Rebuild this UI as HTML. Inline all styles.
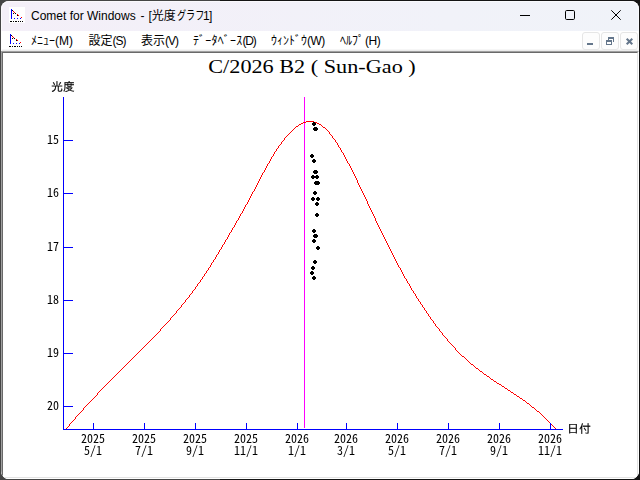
<!DOCTYPE html>
<html lang="ja"><head><meta charset="utf-8"><title>Comet for Windows</title>
<style>
html,body{margin:0;padding:0}
body{width:640px;height:480px;overflow:hidden;position:relative;background:linear-gradient(to right,#454545 0,#454545 220px,#141414 220px,#141414 100%);font-family:"Liberation Sans","Noto Sans CJK JP",sans-serif}
#win{position:absolute;left:1px;top:1px;width:638px;height:478px;border-radius:8px;overflow:hidden;background:#fff}
#tb{position:absolute;left:0;top:0;width:638px;height:30px;background:linear-gradient(to right,#f4eff8,#f1f2f9 70%,#f0f3f9)}
#mb{position:absolute;left:0;top:30px;width:638px;height:20px;box-sizing:border-box;background:#fff;border-bottom:1px solid #ebebeb;box-shadow:inset 0 -1px 0 #f6f6f6}
#mdi{position:absolute;left:0;top:50px;width:638px;height:428px;box-sizing:border-box;border-top:1px solid #a0a0a0;border-left:1px solid #a0a0a0;border-right:1px solid #fff;border-bottom:1px solid #fff;background:#fff}
#mdi i{position:absolute;left:0;top:0;right:0;bottom:0;border-top:1px solid #696969;border-left:1px solid #696969;border-right:1px solid #e3e3e3;border-bottom:1px solid #e3e3e3}
#hl{position:absolute;left:0;top:0;width:638px;height:50px;box-sizing:border-box;border:1px solid rgba(255,255,255,.6);border-bottom:0;border-radius:8px 8px 0 0}
.ico{position:absolute}
.t{position:absolute;white-space:pre;color:#000;font-size:12px;line-height:16px}
#chart{position:absolute;left:0;top:0;will-change:transform}
#chart .lbl text{font-family:"Noto Sans Mono CJK JP","IPAGothic","Liberation Mono",monospace;font-size:12px;fill:#000}
#chart .lbl text.k{font-family:"Liberation Mono","IPAGothic","Noto Sans CJK JP",monospace;stroke:#000;stroke-width:.15px}
#ttl{position:absolute;left:12.25px;top:56.5px;width:600px;text-align:center;font-family:"Liberation Serif",serif;font-size:18px;line-height:20px;color:#000;white-space:pre}
#ttl span{display:inline-block;transform:scale(1.235,.99);transform-origin:50% 50%}
.cb{position:absolute}
.mbtn{position:absolute;top:32px;width:18px;height:17.5px;box-sizing:border-box;border:1px solid #e6e6e6;border-radius:3px;background:#fdfdfd}
</style></head>
<body>
<div id="win">
 <div id="tb"></div>
 <div id="mb"></div>
 <div id="mdi"><i></i></div>
 <div id="hl"></div>
</div>
<svg class="ico" style="left:9px;top:7px" width="16" height="16" viewBox="0 0 16 16" shape-rendering="crispEdges"><rect width="16" height="16" fill="#fff"/><rect x="2" y="2" width="1" height="10" fill="#00f"/><rect x="5" y="11" width="1" height="1" fill="#00f"/><rect x="8" y="11" width="1" height="1" fill="#00f"/><rect x="11" y="11" width="1" height="1" fill="#00f"/><rect x="3" y="3" width="1" height="1" fill="#000"/><rect x="4" y="6" width="1" height="1" fill="#000"/><rect x="6" y="6" width="1" height="1" fill="#000"/><rect x="8" y="8" width="1" height="1" fill="#000"/><rect x="4" y="4" width="1" height="1" fill="#f00"/><rect x="5" y="5" width="1" height="1" fill="#f00"/><rect x="8" y="7" width="1" height="1" fill="#f00"/><rect x="9" y="8" width="1" height="1" fill="#f00"/><rect x="12" y="10" width="1" height="1" fill="#f00"/><rect x="1" y="14" width="2" height="1" fill="#000"/><rect x="4" y="14" width="1" height="1" fill="#000"/><rect x="6" y="14" width="2" height="1" fill="#000"/><rect x="9" y="14" width="1" height="1" fill="#000"/><rect x="11" y="14" width="1" height="1" fill="#000"/><rect x="13" y="14" width="1" height="1" fill="#000"/></svg>
<svg class="ico" style="left:8px;top:32px" width="16" height="16" viewBox="0 0 16 16" shape-rendering="crispEdges"><rect x="2" y="2" width="1" height="10" fill="#00f"/><rect x="5" y="11" width="1" height="1" fill="#00f"/><rect x="8" y="11" width="1" height="1" fill="#00f"/><rect x="11" y="11" width="1" height="1" fill="#00f"/><rect x="3" y="3" width="1" height="1" fill="#000"/><rect x="4" y="6" width="1" height="1" fill="#000"/><rect x="6" y="6" width="1" height="1" fill="#000"/><rect x="8" y="8" width="1" height="1" fill="#000"/><rect x="4" y="4" width="1" height="1" fill="#f00"/><rect x="5" y="5" width="1" height="1" fill="#f00"/><rect x="8" y="7" width="1" height="1" fill="#f00"/><rect x="9" y="8" width="1" height="1" fill="#f00"/><rect x="12" y="10" width="1" height="1" fill="#f00"/><rect x="1" y="14" width="2" height="1" fill="#000"/><rect x="4" y="14" width="1" height="1" fill="#000"/><rect x="6" y="14" width="2" height="1" fill="#000"/><rect x="9" y="14" width="1" height="1" fill="#000"/><rect x="11" y="14" width="1" height="1" fill="#000"/><rect x="13" y="14" width="1" height="1" fill="#000"/></svg>
<div class="t" style="left:31px;top:8px">Comet for Windows</div>
<div class="t" style="left:140.5px;top:8px">-</div>
<div class="t" style="left:148.5px;top:8px">[光度</div>
<div class="t" style="left:176.5px;top:8px;transform:scaleX(.76);transform-origin:0 0">グラフ</div>
<div class="t" style="left:203px;top:8px;letter-spacing:-.6px">1]</div>
<div class="t" style="left:31px;top:33px">ﾒﾆｭｰ<span class="p">(M)</span></div>
<div class="t" style="left:88.5px;top:33px">設定<span class="p" style="letter-spacing:-1px">(S)</span></div>
<div class="t" style="left:141px;top:33px">表示<span class="p" style="letter-spacing:-1px">(V)</span></div>
<div class="t" style="left:193px;top:33px"><span style="letter-spacing:.25px">ﾃﾞｰﾀﾍﾞｰｽ</span><span class="p" style="letter-spacing:-1.2px">(D)</span></div>
<div class="t" style="left:271px;top:33px">ｳｨﾝﾄﾞｳ<span class="p" style="letter-spacing:-.5px">(W)</span></div>
<div class="t" style="left:340px;top:33px">ﾍﾙﾌﾟ<span class="p" style="letter-spacing:-.5px;margin-left:1px">(H)</span></div>
<svg class="cb" style="left:510px;top:5px" width="125" height="22" viewBox="510 5 125 22" fill="none" stroke="#000" stroke-width="1">
 <path d="M520 15.5H530"/>
 <rect x="565.5" y="10.5" width="9" height="9" rx="1.2"/>
 <path d="M611.3 10.3L620.7 19.7M620.7 10.3L611.3 19.7"/>
</svg>
<div class="mbtn" style="left:582px"></div>
<div class="mbtn" style="left:601px"></div>
<div class="mbtn" style="left:620px"></div>
<svg class="cb" style="left:580px;top:31px" width="60" height="20" viewBox="580 31 60 20" fill="#64768b">
 <g shape-rendering="crispEdges"><rect x="587" y="43" width="6" height="2"/>
 <rect x="608" y="37" width="6" height="2"/><rect x="613" y="39" width="1" height="3"/><rect x="608" y="39" width="1" height="1"/>
 <rect x="606" y="40" width="6" height="2"/><rect x="606" y="42" width="1" height="3"/><rect x="611" y="42" width="1" height="3"/><rect x="606" y="44" width="6" height="1"/></g>
 <path d="M626.7 38.7L632.3 44.3M632.3 38.7L626.7 44.3" fill="none" stroke="#64768b" stroke-width="2"/>
</svg>
<div id="ttl"><span>C/2026 B2 ( Sun-Gao )</span></div>
<svg id="chart" width="640" height="480" viewBox="0 0 640 480">
<g shape-rendering="crispEdges">
<rect x="304" y="97" width="1" height="331" fill="#ff00ff"/>
<path fill="#ff0000" d="M66 428h1v1h-1zM67 427h1v1h-1zM68 426h1v1h-1zM69 424h1v2h-1zM70 423h1v1h-1zM71 422h1v1h-1zM72 421h1v1h-1zM73 420h1v1h-1zM74 419h1v1h-1zM75 417h1v2h-1zM76 416h1v1h-1zM77 415h1v1h-1zM78 414h1v1h-1zM79 413h1v1h-1zM80 412h1v1h-1zM81 411h1v1h-1zM82 410h1v1h-1zM83 408h1v2h-1zM84 407h1v1h-1zM85 406h1v1h-1zM86 405h1v1h-1zM87 404h1v1h-1zM88 403h1v1h-1zM89 402h1v1h-1zM90 401h1v1h-1zM91 400h1v1h-1zM92 399h1v1h-1zM93 398h1v1h-1zM94 397h1v1h-1zM95 396h1v1h-1zM96 395h1v1h-1zM97 393h1v2h-1zM98 392h1v1h-1zM99 391h1v1h-1zM100 390h1v1h-1zM101 389h1v1h-1zM102 388h1v1h-1zM103 387h1v1h-1zM104 386h1v1h-1zM105 385h1v1h-1zM106 384h1v1h-1zM107 383h1v1h-1zM108 382h1v1h-1zM109 381h1v1h-1zM110 380h1v1h-1zM111 379h1v1h-1zM112 378h1v1h-1zM113 377h1v1h-1zM114 376h1v1h-1zM115 375h1v1h-1zM116 374h1v1h-1zM117 373h1v1h-1zM118 372h1v1h-1zM119 371h1v1h-1zM120 370h1v1h-1zM121 369h1v1h-1zM122 368h1v1h-1zM123 367h1v1h-1zM124 366h1v1h-1zM125 365h1v1h-1zM126 364h1v1h-1zM127 363h1v1h-1zM128 362h1v1h-1zM129 361h1v1h-1zM130 360h1v1h-1zM131 359h1v1h-1zM132 358h1v1h-1zM133 357h1v1h-1zM134 356h1v1h-1zM135 355h1v1h-1zM136 354h1v1h-1zM137 353h1v1h-1zM138 352h1v1h-1zM139 351h1v1h-1zM140 350h1v1h-1zM141 349h1v1h-1zM142 348h1v1h-1zM143 347h1v1h-1zM144 346h1v1h-1zM145 345h1v1h-1zM146 344h1v1h-1zM147 343h1v1h-1zM148 342h1v1h-1zM149 341h1v1h-1zM150 340h1v1h-1zM151 339h1v1h-1zM152 338h1v1h-1zM153 337h1v1h-1zM154 336h1v1h-1zM155 335h1v1h-1zM156 334h1v1h-1zM157 333h1v1h-1zM158 332h1v1h-1zM159 331h1v1h-1zM160 329h1v2h-1zM161 328h1v1h-1zM162 327h1v1h-1zM163 326h1v1h-1zM164 325h1v1h-1zM165 324h1v1h-1zM166 323h1v1h-1zM167 322h1v1h-1zM168 321h1v1h-1zM169 320h1v1h-1zM170 318h1v2h-1zM171 317h1v1h-1zM172 316h1v1h-1zM173 315h1v1h-1zM174 314h1v1h-1zM175 313h1v1h-1zM176 311h1v2h-1zM177 310h1v1h-1zM178 309h1v1h-1zM179 308h1v1h-1zM180 307h1v1h-1zM181 305h1v2h-1zM182 304h1v1h-1zM183 303h1v1h-1zM184 302h1v1h-1zM185 300h1v2h-1zM186 299h1v1h-1zM187 298h1v1h-1zM188 297h1v1h-1zM189 295h1v2h-1zM190 294h1v1h-1zM191 293h1v1h-1zM192 291h1v2h-1zM193 290h1v1h-1zM194 289h1v1h-1zM195 287h1v2h-1zM196 286h1v1h-1zM197 284h1v2h-1zM198 283h1v1h-1zM199 282h1v1h-1zM200 280h1v2h-1zM201 279h1v1h-1zM202 277h1v2h-1zM203 276h1v1h-1zM204 274h1v2h-1zM205 273h1v1h-1zM206 271h1v2h-1zM207 270h1v1h-1zM208 268h1v2h-1zM209 267h1v1h-1zM210 265h1v2h-1zM211 263h1v2h-1zM212 262h1v1h-1zM213 260h1v2h-1zM214 259h1v1h-1zM215 257h1v2h-1zM216 255h1v2h-1zM217 254h1v1h-1zM218 252h1v2h-1zM219 250h1v2h-1zM220 249h1v1h-1zM221 247h1v2h-1zM222 245h1v2h-1zM223 244h1v1h-1zM224 242h1v2h-1zM225 240h1v2h-1zM226 239h1v1h-1zM227 237h1v2h-1zM228 235h1v2h-1zM229 233h1v2h-1zM230 232h1v1h-1zM231 230h1v2h-1zM232 228h1v2h-1zM233 227h1v1h-1zM234 225h1v2h-1zM235 223h1v2h-1zM236 221h1v2h-1zM237 220h1v1h-1zM238 218h1v2h-1zM239 216h1v2h-1zM240 214h1v2h-1zM241 213h1v1h-1zM242 211h1v2h-1zM243 209h1v2h-1zM244 207h1v2h-1zM245 205h1v2h-1zM246 204h1v1h-1zM247 202h1v2h-1zM248 200h1v2h-1zM249 198h1v2h-1zM250 196h1v2h-1zM251 194h1v2h-1zM252 192h1v2h-1zM253 191h1v1h-1zM254 189h1v2h-1zM255 187h1v2h-1zM256 185h1v2h-1zM257 183h1v2h-1zM258 181h1v2h-1zM259 179h1v2h-1zM260 177h1v2h-1zM261 175h1v2h-1zM262 173h1v2h-1zM263 172h1v1h-1zM264 170h1v2h-1zM265 168h1v2h-1zM266 166h1v2h-1zM267 164h1v2h-1zM268 163h1v1h-1zM269 161h1v2h-1zM270 159h1v2h-1zM271 157h1v2h-1zM272 156h1v1h-1zM273 154h1v2h-1zM274 152h1v2h-1zM275 151h1v1h-1zM276 149h1v2h-1zM277 148h1v1h-1zM278 146h1v2h-1zM279 145h1v1h-1zM280 144h1v1h-1zM281 142h1v2h-1zM282 141h1v1h-1zM283 140h1v1h-1zM284 138h1v2h-1zM285 137h1v1h-1zM286 136h1v1h-1zM287 135h1v1h-1zM288 134h1v1h-1zM289 133h1v1h-1zM290 132h1v1h-1zM291 131h1v1h-1zM292 130h1v1h-1zM293 129h1v1h-1zM294 128h1v1h-1zM295 127h1v1h-1zM296 126h1v1h-1zM297 126h1v1h-1zM298 125h1v1h-1zM299 124h1v1h-1zM300 124h1v1h-1zM301 123h1v1h-1zM302 123h1v1h-1zM303 122h1v1h-1zM304 122h1v1h-1zM305 122h1v1h-1zM306 121h1v1h-1zM307 121h1v1h-1zM308 121h1v1h-1zM309 121h1v1h-1zM310 121h1v1h-1zM311 121h1v1h-1zM312 121h1v1h-1zM313 121h1v1h-1zM314 122h1v1h-1zM315 122h1v1h-1zM316 122h1v1h-1zM317 123h1v1h-1zM318 123h1v1h-1zM319 124h1v1h-1zM320 124h1v1h-1zM321 125h1v1h-1zM322 126h1v1h-1zM323 127h1v1h-1zM324 127h1v1h-1zM325 128h1v1h-1zM326 129h1v1h-1zM327 130h1v1h-1zM328 131h1v1h-1zM329 132h1v2h-1zM330 134h1v1h-1zM331 135h1v1h-1zM332 136h1v2h-1zM333 138h1v1h-1zM334 139h1v1h-1zM335 140h1v2h-1zM336 142h1v1h-1zM337 143h1v2h-1zM338 145h1v2h-1zM339 147h1v1h-1zM340 148h1v2h-1zM341 150h1v2h-1zM342 152h1v1h-1zM343 153h1v2h-1zM344 155h1v2h-1zM345 157h1v2h-1zM346 159h1v2h-1zM347 161h1v2h-1zM348 163h1v1h-1zM349 164h1v2h-1zM350 166h1v2h-1zM351 168h1v2h-1zM352 170h1v2h-1zM353 172h1v2h-1zM354 174h1v2h-1zM355 176h1v2h-1zM356 178h1v2h-1zM357 180h1v3h-1zM358 183h1v2h-1zM359 185h1v2h-1zM360 187h1v2h-1zM361 189h1v2h-1zM362 191h1v2h-1zM363 193h1v2h-1zM364 195h1v2h-1zM365 197h1v2h-1zM366 199h1v2h-1zM367 201h1v3h-1zM368 204h1v2h-1zM369 206h1v2h-1zM370 208h1v2h-1zM371 210h1v2h-1zM372 212h1v2h-1zM373 214h1v2h-1zM374 216h1v2h-1zM375 218h1v3h-1zM376 221h1v2h-1zM377 223h1v2h-1zM378 225h1v2h-1zM379 227h1v2h-1zM380 229h1v2h-1zM381 231h1v2h-1zM382 233h1v2h-1zM383 235h1v2h-1zM384 237h1v2h-1zM385 239h1v2h-1zM386 241h1v2h-1zM387 243h1v2h-1zM388 245h1v2h-1zM389 247h1v2h-1zM390 249h1v2h-1zM391 251h1v2h-1zM392 253h1v2h-1zM393 255h1v2h-1zM394 257h1v2h-1zM395 259h1v2h-1zM396 261h1v2h-1zM397 263h1v2h-1zM398 265h1v2h-1zM399 267h1v1h-1zM400 268h1v2h-1zM401 270h1v2h-1zM402 272h1v2h-1zM403 274h1v2h-1zM404 276h1v2h-1zM405 278h1v1h-1zM406 279h1v2h-1zM407 281h1v2h-1zM408 283h1v1h-1zM409 284h1v2h-1zM410 286h1v2h-1zM411 288h1v2h-1zM412 290h1v1h-1zM413 291h1v2h-1zM414 293h1v1h-1zM415 294h1v2h-1zM416 296h1v2h-1zM417 298h1v1h-1zM418 299h1v2h-1zM419 301h1v1h-1zM420 302h1v2h-1zM421 304h1v1h-1zM422 305h1v2h-1zM423 307h1v1h-1zM424 308h1v2h-1zM425 310h1v1h-1zM426 311h1v2h-1zM427 313h1v1h-1zM428 314h1v2h-1zM429 316h1v1h-1zM430 317h1v2h-1zM431 319h1v1h-1zM432 320h1v1h-1zM433 321h1v2h-1zM434 323h1v1h-1zM435 324h1v2h-1zM436 326h1v1h-1zM437 327h1v1h-1zM438 328h1v1h-1zM439 329h1v2h-1zM440 331h1v1h-1zM441 332h1v1h-1zM442 333h1v2h-1zM443 335h1v1h-1zM444 336h1v1h-1zM445 337h1v1h-1zM446 338h1v1h-1zM447 339h1v2h-1zM448 341h1v1h-1zM449 342h1v1h-1zM450 343h1v1h-1zM451 344h1v1h-1zM452 345h1v1h-1zM453 346h1v1h-1zM454 347h1v1h-1zM455 348h1v2h-1zM456 350h1v1h-1zM457 351h1v1h-1zM458 352h1v1h-1zM459 353h1v1h-1zM460 354h1v1h-1zM461 355h1v1h-1zM462 356h1v1h-1zM463 356h1v1h-1zM464 357h1v1h-1zM465 358h1v1h-1zM466 359h1v1h-1zM467 360h1v1h-1zM468 361h1v1h-1zM469 362h1v1h-1zM470 363h1v1h-1zM471 364h1v1h-1zM472 364h1v1h-1zM473 365h1v1h-1zM474 366h1v1h-1zM475 367h1v1h-1zM476 368h1v1h-1zM477 368h1v1h-1zM478 369h1v1h-1zM479 370h1v1h-1zM480 371h1v1h-1zM481 371h1v1h-1zM482 372h1v1h-1zM483 373h1v1h-1zM484 374h1v1h-1zM485 374h1v1h-1zM486 375h1v1h-1zM487 376h1v1h-1zM488 376h1v1h-1zM489 377h1v1h-1zM490 378h1v1h-1zM491 379h1v1h-1zM492 379h1v1h-1zM493 380h1v1h-1zM494 381h1v1h-1zM495 381h1v1h-1zM496 382h1v1h-1zM497 383h1v1h-1zM498 383h1v1h-1zM499 384h1v1h-1zM500 384h1v1h-1zM501 385h1v1h-1zM502 386h1v1h-1zM503 386h1v1h-1zM504 387h1v1h-1zM505 388h1v1h-1zM506 388h1v1h-1zM507 389h1v1h-1zM508 390h1v1h-1zM509 390h1v1h-1zM510 391h1v1h-1zM511 392h1v1h-1zM512 392h1v1h-1zM513 393h1v1h-1zM514 394h1v1h-1zM515 394h1v1h-1zM516 395h1v1h-1zM517 396h1v1h-1zM518 396h1v1h-1zM519 397h1v1h-1zM520 398h1v1h-1zM521 398h1v1h-1zM522 399h1v1h-1zM523 400h1v1h-1zM524 400h1v1h-1zM525 401h1v1h-1zM526 402h1v1h-1zM527 403h1v1h-1zM528 403h1v1h-1zM529 404h1v1h-1zM530 405h1v1h-1zM531 406h1v1h-1zM532 407h1v1h-1zM533 407h1v1h-1zM534 408h1v1h-1zM535 409h1v1h-1zM536 410h1v1h-1zM537 411h1v1h-1zM538 411h1v1h-1zM539 412h1v1h-1zM540 413h1v1h-1zM541 414h1v1h-1zM542 415h1v1h-1zM543 416h1v1h-1zM544 417h1v1h-1zM545 418h1v1h-1zM546 419h1v1h-1zM547 420h1v1h-1zM548 421h1v1h-1zM549 422h1v1h-1zM550 423h1v1h-1zM551 424h1v1h-1zM552 425h1v1h-1zM553 426h1v1h-1zM554 427h1v1h-1zM555 428h1v1h-1z"/>
<rect x="63" y="97" width="1" height="333" fill="#0000ff"/>
<rect x="63" y="429" width="500" height="1" fill="#0000ff"/>
<rect x="64" y="140" width="9" height="1" fill="#0000ff"/>
<rect x="64" y="193" width="9" height="1" fill="#0000ff"/>
<rect x="64" y="247" width="9" height="1" fill="#0000ff"/>
<rect x="64" y="300" width="9" height="1" fill="#0000ff"/>
<rect x="64" y="353" width="9" height="1" fill="#0000ff"/>
<rect x="64" y="406" width="9" height="1" fill="#0000ff"/>
<rect x="93" y="423" width="1" height="6" fill="#0000ff"/>
<rect x="144" y="423" width="1" height="6" fill="#0000ff"/>
<rect x="195" y="423" width="1" height="6" fill="#0000ff"/>
<rect x="246" y="423" width="1" height="6" fill="#0000ff"/>
<rect x="297" y="423" width="1" height="6" fill="#0000ff"/>
<rect x="346" y="423" width="1" height="6" fill="#0000ff"/>
<rect x="397" y="423" width="1" height="6" fill="#0000ff"/>
<rect x="448" y="423" width="1" height="6" fill="#0000ff"/>
<rect x="499" y="423" width="1" height="6" fill="#0000ff"/>
<rect x="550" y="423" width="1" height="6" fill="#0000ff"/>
<rect x="313" y="122" width="2" height="4" fill="#000"/><rect x="312" y="123" width="4" height="2" fill="#000"/>
<rect x="314" y="127" width="2" height="4" fill="#000"/><rect x="313" y="128" width="4" height="2" fill="#000"/>
<rect x="315" y="127" width="2" height="4" fill="#000"/><rect x="314" y="128" width="4" height="2" fill="#000"/>
<rect x="311" y="154" width="2" height="4" fill="#000"/><rect x="310" y="155" width="4" height="2" fill="#000"/>
<rect x="313" y="159" width="2" height="4" fill="#000"/><rect x="312" y="160" width="4" height="2" fill="#000"/>
<rect x="314" y="170" width="2" height="4" fill="#000"/><rect x="313" y="171" width="4" height="2" fill="#000"/>
<rect x="315" y="170" width="2" height="4" fill="#000"/><rect x="314" y="171" width="4" height="2" fill="#000"/>
<rect x="312" y="175" width="2" height="4" fill="#000"/><rect x="311" y="176" width="4" height="2" fill="#000"/>
<rect x="316" y="175" width="2" height="4" fill="#000"/><rect x="315" y="176" width="4" height="2" fill="#000"/>
<rect x="315" y="181" width="2" height="4" fill="#000"/><rect x="314" y="182" width="4" height="2" fill="#000"/>
<rect x="317" y="181" width="2" height="4" fill="#000"/><rect x="316" y="182" width="4" height="2" fill="#000"/>
<rect x="314" y="191" width="2" height="4" fill="#000"/><rect x="313" y="192" width="4" height="2" fill="#000"/>
<rect x="312" y="197" width="2" height="4" fill="#000"/><rect x="311" y="198" width="4" height="2" fill="#000"/>
<rect x="317" y="197" width="2" height="4" fill="#000"/><rect x="316" y="198" width="4" height="2" fill="#000"/>
<rect x="316" y="202" width="2" height="4" fill="#000"/><rect x="315" y="203" width="4" height="2" fill="#000"/>
<rect x="316" y="213" width="2" height="4" fill="#000"/><rect x="315" y="214" width="4" height="2" fill="#000"/>
<rect x="313" y="229" width="2" height="4" fill="#000"/><rect x="312" y="230" width="4" height="2" fill="#000"/>
<rect x="314" y="234" width="2" height="4" fill="#000"/><rect x="313" y="235" width="4" height="2" fill="#000"/>
<rect x="315" y="234" width="2" height="4" fill="#000"/><rect x="314" y="235" width="4" height="2" fill="#000"/>
<rect x="313" y="239" width="2" height="4" fill="#000"/><rect x="312" y="240" width="4" height="2" fill="#000"/>
<rect x="317" y="246" width="2" height="4" fill="#000"/><rect x="316" y="247" width="4" height="2" fill="#000"/>
<rect x="314" y="260" width="2" height="4" fill="#000"/><rect x="313" y="261" width="4" height="2" fill="#000"/>
<rect x="312" y="266" width="2" height="4" fill="#000"/><rect x="311" y="267" width="4" height="2" fill="#000"/>
<rect x="311" y="271" width="2" height="4" fill="#000"/><rect x="310" y="272" width="4" height="2" fill="#000"/>
<rect x="313" y="276" width="2" height="4" fill="#000"/><rect x="312" y="277" width="4" height="2" fill="#000"/>
</g>
<g class="lbl">
<text x="53" y="144" text-anchor="middle">15</text>
<text x="53" y="197" text-anchor="middle">16</text>
<text x="53" y="251" text-anchor="middle">17</text>
<text x="53" y="304" text-anchor="middle">18</text>
<text x="53" y="357" text-anchor="middle">19</text>
<text x="53" y="410" text-anchor="middle">20</text>
<text x="93" y="443" text-anchor="middle">2025</text>
<text x="93" y="455" text-anchor="middle">5/1</text>
<text x="144" y="443" text-anchor="middle">2025</text>
<text x="144" y="455" text-anchor="middle">7/1</text>
<text x="195" y="443" text-anchor="middle">2025</text>
<text x="195" y="455" text-anchor="middle">9/1</text>
<text x="246" y="443" text-anchor="middle">2025</text>
<text x="246" y="455" text-anchor="middle">11/1</text>
<text x="297" y="443" text-anchor="middle">2026</text>
<text x="297" y="455" text-anchor="middle">1/1</text>
<text x="346" y="443" text-anchor="middle">2026</text>
<text x="346" y="455" text-anchor="middle">3/1</text>
<text x="397" y="443" text-anchor="middle">2026</text>
<text x="397" y="455" text-anchor="middle">5/1</text>
<text x="448" y="443" text-anchor="middle">2026</text>
<text x="448" y="455" text-anchor="middle">7/1</text>
<text x="499" y="443" text-anchor="middle">2026</text>
<text x="499" y="455" text-anchor="middle">9/1</text>
<text x="550" y="443" text-anchor="middle">2026</text>
<text x="550" y="455" text-anchor="middle">11/1</text>
<text x="63" y="91" text-anchor="middle" class="k">光度</text>
<text x="579" y="433" text-anchor="middle" class="k">日付</text>
</g>
</svg>
</body></html>
